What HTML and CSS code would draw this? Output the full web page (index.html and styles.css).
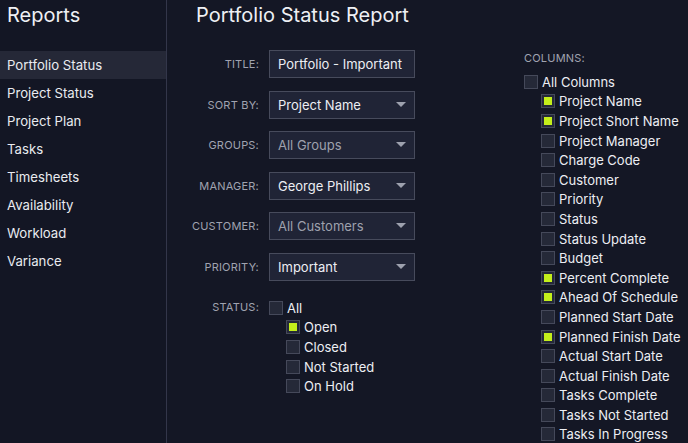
FILE: index.html
```html
<!DOCTYPE html>
<html lang="en">
<head>
  <meta charset="UTF-8">
  <meta name="viewport" content="width=device-width, initial-scale=1.0">
  <title>Portfolio Status Report</title>
  <link rel="stylesheet" href="styles.css">
</head>
<body>

  <!-- Sidebar -->
  <div class="sidebar">
    <div class="sidebar-title">Reports</div>
    <ul class="menu">
      <li class="menu-item active">Portfolio Status</li>
      <li class="menu-item">Project Status</li>
      <li class="menu-item">Project Plan</li>
      <li class="menu-item">Tasks</li>
      <li class="menu-item">Timesheets</li>
      <li class="menu-item">Availability</li>
      <li class="menu-item">Workload</li>
      <li class="menu-item">Variance</li>
    </ul>
  </div>

  <!-- Main -->
  <div class="main">
    <div class="title">Portfolio Status Report</div>

    <div class="content">
      <div class="form">
        <div class="field">
          <label>TITLE:</label>
          <div class="control">Portfolio - Important</div>
        </div>
        <div class="field">
          <label>SORT BY:</label>
          <div class="control select">Project Name</div>
        </div>
        <div class="field">
          <label>GROUPS:</label>
          <div class="control select muted">All Groups</div>
        </div>
        <div class="field">
          <label>MANAGER:</label>
          <div class="control select">George Phillips</div>
        </div>
        <div class="field">
          <label>CUSTOMER:</label>
          <div class="control select muted">All Customers</div>
        </div>
        <div class="field">
          <label>PRIORITY:</label>
          <div class="control select">Important</div>
        </div>

        <div class="field status-field">
          <label>STATUS:</label>
          <div class="check-list">
            <div class="check"><span class="box"></span>All</div>
            <div class="check sub"><span class="box checked"></span>Open</div>
            <div class="check sub"><span class="box"></span>Closed</div>
            <div class="check sub"><span class="box"></span>Not Started</div>
            <div class="check sub"><span class="box"></span>On Hold</div>
          </div>
        </div>
      </div>

      <div class="columns">
        <div class="columns-label">COLUMNS:</div>
        <div class="check-list" id="columnList"></div>
      </div>
    </div>
  </div>

  <script>
    const columns = [
      ['Project Name', true],
      ['Project Short Name', true],
      ['Project Manager', false],
      ['Charge Code', false],
      ['Customer', false],
      ['Priority', false],
      ['Status', false],
      ['Status Update', false],
      ['Budget', false],
      ['Percent Complete', true],
      ['Ahead Of Schedule', true],
      ['Planned Start Date', false],
      ['Planned Finish Date', true],
      ['Actual Start Date', false],
      ['Actual Finish Date', false],
      ['Tasks Complete', false],
      ['Tasks Not Started', false],
      ['Tasks In Progress', false]
    ];

    const list = document.getElementById('columnList');

    function addCheck(name, checked, sub) {
      const row = document.createElement('div');
      row.className = sub ? 'check sub' : 'check';
      const box = document.createElement('span');
      box.className = checked ? 'box checked' : 'box';
      row.appendChild(box);
      row.appendChild(document.createTextNode(name));
      list.appendChild(row);
    }

    addCheck('All Columns', false, false);
    columns.forEach(col => addCheck(col[0], col[1], true));
  </script>

</body>
</html>
```

FILE: styles.css
```css
/* Basic reset */
* {
  margin: 0;
  padding: 0;
  box-sizing: border-box;
  font-family: Inter, "Noto Sans", sans-serif;
}

body {
  display: flex;
  height: 100vh;
  overflow: hidden;
  background-color: #141725;
  color: #e9ebf0;
}

/* Sidebar */
.sidebar {
  width: 167px;
  flex-shrink: 0;
  background-color: #131624;
  border-right: 1px solid #33364a;
}

.sidebar-title {
  font-size: 20px;
  padding: 3px 0 0 7px;
  height: 51px;
  color: #eef0f4;
}

.menu {
  list-style: none;
}

.menu-item {
  height: 28px;
  line-height: 28px;
  padding-left: 7px;
  font-size: 13.2px;
}

.menu-item.active {
  background-color: #252837;
}

/* Main area */
.main {
  flex: 1;
  padding-left: 19px;
}

.title {
  font-size: 20px;
  padding: 3px 0 0 10px;
  height: 50px;
  color: #eef0f4;
}

.content {
  display: flex;
}

.form {
  display: flex;
  flex-direction: column;
  gap: 12.6px;
}

.field {
  display: flex;
  align-items: center;
  gap: 10px;
}

.field label {
  width: 73px;
  text-align: right;
  font-size: 11px;
  letter-spacing: 0.2px;
  color: #a0a3b0;
}

.control {
  position: relative;
  width: 146px;
  height: 28px;
  line-height: 26px;
  padding-left: 8px;
  font-size: 13px;
  background-color: #202436;
  border: 1px solid #474b5c;
  color: #eceef3;
}

.control.muted {
  color: #9ea1ad;
}

/* Dropdown caret */
.select::after {
  content: "";
  position: absolute;
  right: 8px;
  top: 10px;
  border-left: 5px solid transparent;
  border-right: 5px solid transparent;
  border-top: 5px solid #9da1ae;
}

.status-field {
  align-items: flex-start;
  margin-top: 4.5px;
}

.status-field label {
  line-height: 19.6px;
}

/* Checkbox lists */
.check {
  display: flex;
  align-items: center;
  height: 19.6px;
  font-size: 13px;
  color: #eceef3;
}

.check.sub {
  padding-left: 17px;
}

.box {
  width: 14px;
  height: 14px;
  margin-right: 4px;
  border: 1px solid #45495a;
  background-color: #252938;
  display: flex;
  align-items: center;
  justify-content: center;
}

.box.checked::after {
  content: "";
  width: 8px;
  height: 8px;
  background-color: #c4ef1b;
}

/* Columns section */
.columns {
  margin-left: 109px;
}

.columns-label {
  font-size: 11px;
  letter-spacing: 0.2px;
  color: #a0a3b0;
  height: 22px;
  line-height: 16px;
}
```
